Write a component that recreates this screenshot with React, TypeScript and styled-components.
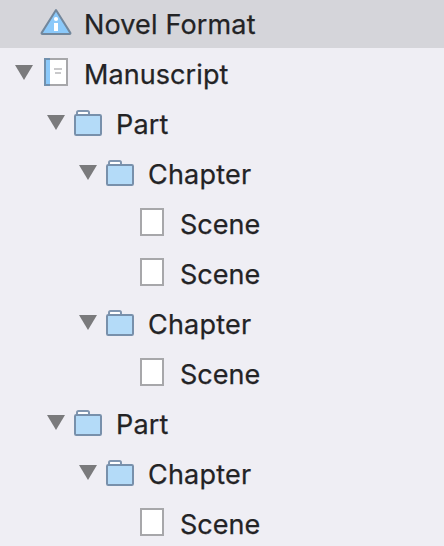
import React from "react";
import styled, { createGlobalStyle } from "styled-components";

const GlobalStyle = createGlobalStyle`
  html, body { margin: 0; height: 100%; overflow: hidden; background: #efeef4; }
`;

const Outline = styled.div`
  display: flex;
  flex-direction: column;
  width: 444px;
  height: 546px;
  overflow: hidden;
  background: #efeef4;
  font-family: Inter, "Liberation Sans", sans-serif;
`;

const Row = styled.div<{ $level: number; $selected?: boolean }>`
  display: flex;
  align-items: stretch;
  flex: none;
  height: 50px;
  box-sizing: border-box;
  padding-left: ${(p) => 8 + p.$level * 32}px;
  background: ${(p) => (p.$selected ? "#d5d5da" : "transparent")};
  &:first-child { margin-top: -2px; }
`;

const Glyph = styled.svg`
  display: block;
  flex: none;
  width: 32px;
  height: 50px;
`;

const Label = styled.span<{ $tracking: number }>`
  margin-left: 12px;
  color: #232325;
  font-size: 27px;
  line-height: 54px;
  letter-spacing: ${(p) => p.$tracking}px;
  -webkit-text-stroke: 0.25px #232325;
  white-space: nowrap;
`;

type Kind = "info" | "book" | "folder" | "page";

const Disclosure = ({ open }: { open: boolean }) => (
  <Glyph viewBox="0 0 32 50">
    {open && <path d="M7 17H25L16 32Z" fill="#7a7a7c" />}
  </Glyph>
);

const InfoIcon = () => (
  <Glyph viewBox="0 0 32 50">
    <path
      d="M16 12L30.2 34.6Q31 36 29.5 36H2.5Q1 36 1.8 34.6Z"
      fill="#8bc9fa"
      stroke="#72879c"
      strokeWidth="2"
      strokeLinejoin="round"
    />
    <circle cx="16" cy="21" r="2.1" fill="#fff" />
    <rect x="14" y="25" width="4" height="8" fill="#fff" />
  </Glyph>
);

const BookIcon = () => (
  <Glyph viewBox="0 0 32 50">
    <rect x="5" y="11" width="22" height="26" fill="#fff" />
    <rect x="6" y="12" width="4" height="24" fill="#8bc9fa" />
    <path d="M10 11H27V37H10" fill="none" stroke="#a7a7aa" strokeWidth="2" />
    <path d="M10 11H5V37H10" fill="none" stroke="#7190ad" strokeWidth="2" />
    <path d="M14 21H22M15 25H21" stroke="#c9c9cb" strokeWidth="2" />
  </Glyph>
);

const FolderIcon = () => (
  <Glyph viewBox="0 0 32 50">
    <path d="M5 17V14.5Q5 13 6.5 13H15.5Q17 13 17 14.5V17" fill="#fff" stroke="#8196b0" strokeWidth="2" />
    <rect x="3" y="17" width="26" height="20" rx="1.2" fill="#b4dbf8" stroke="#7890ab" strokeWidth="2" />
  </Glyph>
);

const PageIcon = () => (
  <Glyph viewBox="0 0 32 50">
    <rect x="5" y="11" width="22" height="26" fill="#fff" stroke="#a7a7aa" strokeWidth="2" />
  </Glyph>
);

const icons: Record<Kind, React.FC> = {
  info: InfoIcon,
  book: BookIcon,
  folder: FolderIcon,
  page: PageIcon,
};

const tracking: Record<string, number> = {
  "Novel Format": 0.15,
  Manuscript: 0.08,
  Part: 0.15,
  Chapter: 0.2,
  Scene: 0,
};

const items: { label: string; kind: Kind; level: number; open?: boolean; selected?: boolean }[] = [
  { label: "Novel Format", kind: "info", level: 0, selected: true },
  { label: "Manuscript", kind: "book", level: 0, open: true },
  { label: "Part", kind: "folder", level: 1, open: true },
  { label: "Chapter", kind: "folder", level: 2, open: true },
  { label: "Scene", kind: "page", level: 3 },
  { label: "Scene", kind: "page", level: 3 },
  { label: "Chapter", kind: "folder", level: 2, open: true },
  { label: "Scene", kind: "page", level: 3 },
  { label: "Part", kind: "folder", level: 1, open: true },
  { label: "Chapter", kind: "folder", level: 2, open: true },
  { label: "Scene", kind: "page", level: 3 },
];

export default function App() {
  return (
    <>
      <GlobalStyle />
      <Outline>
        {items.map((item, i) => {
          const Icon = icons[item.kind];
          return (
            <Row key={i} $level={item.level} $selected={item.selected}>
              <Disclosure open={!!item.open} />
              <Icon />
              <Label $tracking={tracking[item.label]}>{item.label}</Label>
            </Row>
          );
        })}
      </Outline>
    </>
  );
}
